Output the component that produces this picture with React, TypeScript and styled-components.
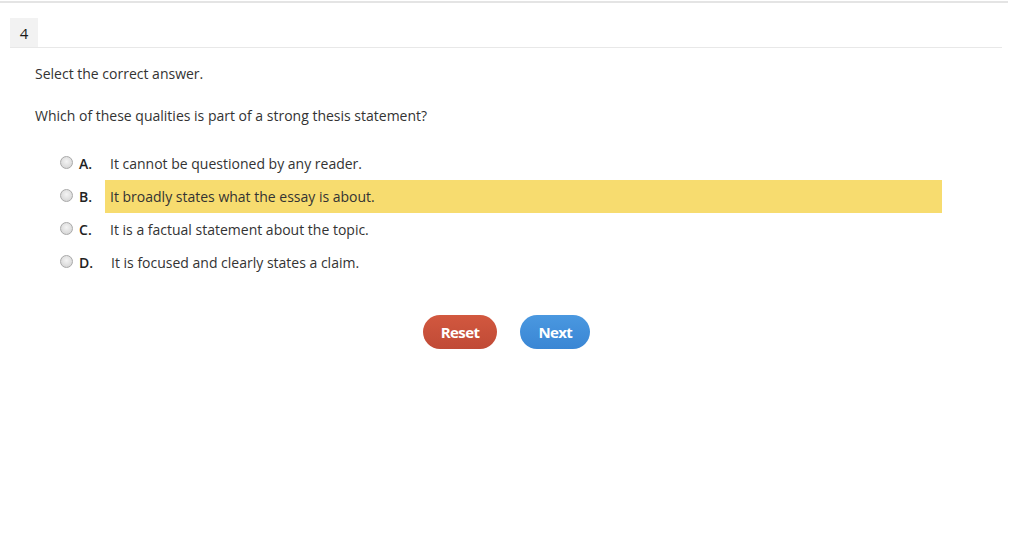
import React, { useState } from 'react'
import styled, { createGlobalStyle } from 'styled-components'

const GlobalStyle = createGlobalStyle`
  body {
    margin: 0;
    background: #fff;
    font-family: 'Open Sans', 'Liberation Sans', sans-serif;
    color: #333;
  }
`

const TopRule = styled.div`
  height: 1px;
  border-bottom: 2px solid #e4e4e4;
  margin-right: 6px;
`

const Header = styled.div`
  display: flex;
  margin: 15px 12px 0 10px;
  border-bottom: 1px solid #e8e8e8;
`

const NumberBox = styled.div`
  width: 28px;
  height: 29px;
  background: #f2f2f2;
  display: flex;
  align-items: center;
  justify-content: center;
  font-size: 15px;
  color: #1a1a1a;
`

const Body = styled.div`
  padding: 16px 0 0 35px;
  font-size: 14px;
  line-height: 20px;
`

const Prompt = styled.p<{ $gap: number }>`
  margin: 0 0 ${({ $gap }) => $gap}px;
`

const Options = styled.div`
  padding-left: 25px;
  width: 882px;
`

const Row = styled.label`
  display: grid;
  grid-template-columns: 19px 26px 1fr;
  align-items: center;
  height: 33px;
  cursor: pointer;
`

const Radio = styled.span`
  width: 11px;
  height: 11px;
  border-radius: 50%;
  border: 1px solid #a9a9a9;
  background: radial-gradient(circle at 50% 40%, #f4f4f4 0%, #d6d6d6 80%);
  margin-top: -2px;
`

const Letter = styled.span`
  font-weight: 600;
  color: #222;
`

const Answer = styled.span<{ $hl: boolean; $shift?: number }>`
  height: 33px;
  display: flex;
  align-items: center;
  padding-left: ${({ $shift }) => 5 + ($shift || 0)}px;
  background: ${({ $hl }) => ($hl ? '#f7dc6f' : 'transparent')};
`

const Buttons = styled.div`
  display: flex;
  justify-content: center;
  gap: 23px;
  margin-top: 36px;
  padding-right: 1px;
`

const Button = styled.button<{ $tone: 'red' | 'blue' }>`
  height: 34px;
  padding: 0 18px;
  border: none;
  border-radius: 17px;
  font-family: 'Open Sans', 'Liberation Sans', sans-serif;
  font-weight: 700;
  font-size: 15px;
  letter-spacing: -0.6px;
  color: #fff;
  background: ${({ $tone }) =>
    $tone === 'red'
      ? 'linear-gradient(#d2583f, #c04a36)'
      : 'linear-gradient(#4a98e0, #3a86d4)'};
`

const options = [
  { key: 'A', text: 'It cannot be questioned by any reader.' },
  { key: 'B', text: 'It broadly states what the essay is about.' },
  { key: 'C', text: 'It is a factual statement about the topic.' },
  { key: 'D', text: 'It is focused and clearly states a claim.', shift: 1 },
]

export default function App() {
  const [highlight] = useState('B')

  return (
    <>
      <GlobalStyle />
      <TopRule />
      <Header>
        <NumberBox>4</NumberBox>
      </Header>
      <Body>
        <Prompt $gap={22}>Select the correct answer.</Prompt>
        <Prompt $gap={21}>Which of these qualities is part of a strong thesis statement?</Prompt>
        <Options>
          {options.map(({ key, text, shift }) => (
            <Row key={key}>
              <Radio />
              <Letter>{key}.</Letter>
              <Answer $hl={highlight === key} $shift={shift}>
                {text}
              </Answer>
            </Row>
          ))}
        </Options>
      </Body>
      <Buttons>
        <Button $tone="red">Reset</Button>
        <Button $tone="blue">Next</Button>
      </Buttons>
    </>
  )
}
